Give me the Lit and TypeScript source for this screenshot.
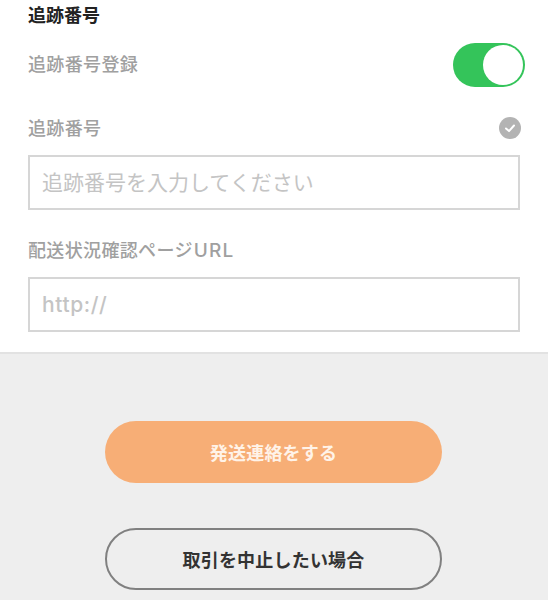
import { LitElement, html, css } from "lit";
import { customElement } from "lit/decorators.js";

@customElement("app-root")
export class AppRoot extends LitElement {
  static styles = css`
    :host {
      display: block;
      width: 548px;
      height: 600px;
      overflow: hidden;
      background: #eeeeee;
      font-family: "Noto Sans CJK JP", "Noto Sans", sans-serif;
    }
    .form {
      background: #fff;
      height: 352px;
      box-sizing: content-box;
      border-bottom: 2px solid #e2e2e2;
      padding: 0 28px;
      display: flex;
      flex-direction: column;
    }
    .title {
      font-size: 18px;
      line-height: 26px;
      height: 26px;
      margin-top: 1px;
      font-weight: 700;
      color: #222;
    }
    .row {
      display: flex;
      align-items: center;
      justify-content: space-between;
    }
    .label {
      font-size: 18px;
      line-height: 26px;
      font-weight: 500;
      color: #a0a0a0;
      letter-spacing: 0.35px;
    }
    .latin {
      font-family: Inter, sans-serif;
      font-weight: 500;
      font-size: 19px;
      line-height: 1;
      letter-spacing: 1.2px;
      margin-left: 1px;
    }
    .switch-row {
      margin-top: 16px;
      height: 44px;
      margin-right: -5px;
    }
    .switch-row .label {
      padding-bottom: 5px;
    }
    .switch {
      width: 72px;
      height: 44px;
      border-radius: 22px;
      background: #34c45a;
      box-sizing: border-box;
      padding: 2px;
      display: flex;
      justify-content: flex-end;
    }
    .knob {
      width: 40px;
      height: 40px;
      border-radius: 50%;
      background: #fff;
    }
    .num-row {
      margin-top: 27px;
      height: 26px;
    }
    .check {
      display: block;
      width: 22px;
      height: 22px;
      margin-top: 2px;
      margin-right: -1px;
    }
    .field {
      display: block;
      width: 100%;
      height: 55px;
      box-sizing: border-box;
      border: 2px solid #d6d6d6;
      background: #fff;
      padding: 0 12px;
      font: inherit;
      font-size: 21px;
      font-weight: 400;
      outline: none;
      border-radius: 0;
    }
    .field::placeholder {
      color: #c4c4c4;
      opacity: 1;
    }
    .field.first {
      margin-top: 15px;
      padding-bottom: 3px;
    }
    .url-label {
      margin-top: 26px;
      height: 26px;
    }
    .field.second {
      margin-top: 15px;
      font-family: Inter, sans-serif;
      font-weight: 500;
      font-size: 21px;
      letter-spacing: 0.6px;
    }
    .actions {
      display: flex;
      flex-direction: column;
      align-items: center;
      gap: 45px;
      padding-top: 67px;
      padding-right: 1px;
    }
    .btn {
      width: 337px;
      height: 62px;
      border-radius: 31px;
      box-sizing: border-box;
      font-size: 18px;
      line-height: 26px;
      font-weight: 700;
      letter-spacing: 0.2px;
      display: flex;
      align-items: center;
      justify-content: center;
    }
    .primary {
      background: #f7ae76;
      color: #fff3e8;
    }
    .secondary {
      border: 2px solid #808080;
      color: #333;
    }
  `;

  render() {
    return html`
      <div class="form">
        <div class="title">追跡番号</div>
        <div class="row switch-row">
          <span class="label">追跡番号登録</span>
          <div class="switch"><div class="knob"></div></div>
        </div>
        <div class="row num-row">
          <span class="label">追跡番号</span>
          <svg class="check" viewBox="0 0 22 22">
            <circle cx="11" cy="11" r="11" fill="#b3b3b3"></circle>
            <path d="M7 11.5l3 2.6 5-5.6" fill="none" stroke="#fff" stroke-width="2" stroke-linecap="round" stroke-linejoin="round"></path>
          </svg>
        </div>
        <input class="field first" placeholder="追跡番号を入力してください" />
        <div class="label url-label">配送状況確認ページ<span class="latin">URL</span></div>
        <input class="field second" placeholder="http://" />
      </div>
      <div class="actions">
        <div class="btn primary">発送連絡をする</div>
        <div class="btn secondary">取引を中止したい場合</div>
      </div>
    `;
  }
}
